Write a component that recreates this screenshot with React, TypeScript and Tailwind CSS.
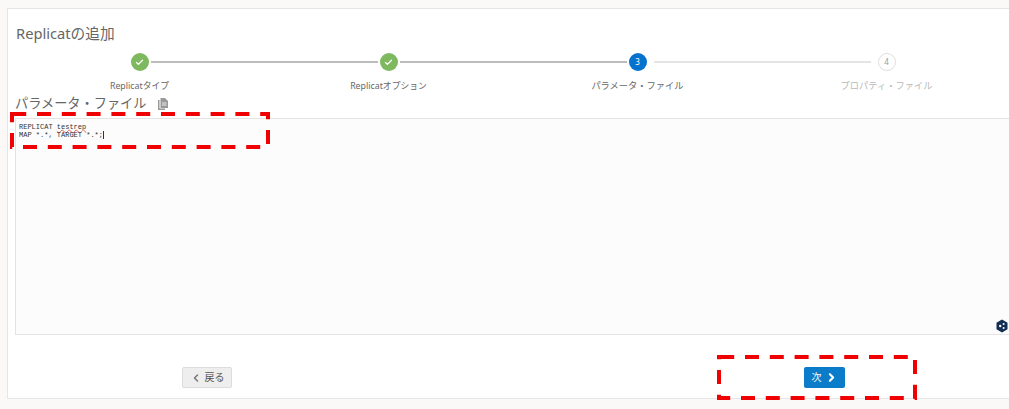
import { Check, ChevronLeft, ChevronRight } from 'lucide-react';

const steps = [
  { label: 'Replicatタイプ', state: 'done' },
  { label: 'Replicatオプション', state: 'done' },
  { label: 'パラメータ・ファイル', state: 'current' },
  { label: 'プロパティ・ファイル', state: 'todo' },
];

function StepCircle({ state, index }: { state: string; index: number }) {
  if (state === 'done') {
    return (
      <div className="flex h-[18px] w-[18px] shrink-0 items-center justify-center rounded-full bg-[#7fb95f]">
        <Check className="h-[9px] w-[9px] text-white" strokeWidth={3.5} />
      </div>
    );
  }
  if (state === 'current') {
    return (
      <div className="flex h-[18px] w-[18px] shrink-0 items-center justify-center rounded-full bg-[#0572ce] text-[8px] text-white">
        {index + 1}
      </div>
    );
  }
  return (
    <div className="flex h-[18px] w-[18px] shrink-0 items-center justify-center rounded-full border border-[#dfdfdf] bg-white text-[8px] text-[#999]">
      {index + 1}
    </div>
  );
}

function Stepper() {
  return (
    <div className="mt-[10px] grid w-[996px] grid-cols-4">
      {steps.map((step, i) => (
        <div key={step.label} className="flex flex-col items-center">
          <div className="flex w-full items-center">
            <div className="flex-1">
              {i > 0 && <div className={i < 3 ? 'mr-[2px] h-[1.5px] bg-[#bcbcbc]' : 'mr-[7px] h-[1.5px] bg-[#e4e4e4]'} />}
            </div>
            <StepCircle state={step.state} index={i} />
            <div className="flex-1">
              {i < 3 && <div className={i < 2 ? 'ml-[2px] h-[1.5px] bg-[#bcbcbc]' : 'ml-[7px] h-[1.5px] bg-[#e4e4e4]'} />}
            </div>
          </div>
          <div
            className={`mt-[8px] whitespace-nowrap leading-[14px] ${i < 2 ? 'text-[8.8px]' : 'text-[9.25px]'} ${
              step.state === 'todo' ? 'text-[#b8b8b8]' : 'text-[#666]'
            }`}
          >
            {step.label}
          </div>
        </div>
      ))}
    </div>
  );
}

// dashed annotation boxes drawn on top of the screenshot, one line per side
// offsets = [top, right, bottom, left]
function DashedBox({ className, w, h, offsets }: { className: string; w: number; h: number; offsets: number[] }) {
  const sides = [
    [0, 2, w, 2],
    [w - 2, 0, w - 2, h],
    [0, h - 2, w, h - 2],
    [2, 0, 2, h],
  ];
  return (
    <svg className={`pointer-events-none absolute ${className}`} width={w} height={h}>
      {sides.map(([x1, y1, x2, y2], i) => (
        <line
          key={i}
          x1={x1}
          y1={y1}
          x2={x2}
          y2={y2}
          stroke="#f00000"
          strokeWidth="4"
          strokeDasharray="14 10.8"
          strokeDashoffset={offsets[i]}
        />
      ))}
    </svg>
  );
}

export default function App() {
  return (
    <div
      className="relative h-[409px] w-[1009px] overflow-hidden bg-[#faf9f7] pl-[7px] pt-[8px]"
      style={{ fontFamily: '"Noto Sans", "Noto Sans CJK JP", sans-serif' }}
    >
      <div className="h-[391px] w-[1020px] border border-[#e6e6e6] bg-white pl-[7px]">
        <h1 className="mt-[14px] pl-[1px] text-[14.7px] font-normal leading-[20px] text-[#666]">Replicatの追加</h1>
        <Stepper />

        <div className="mt-[2px] flex h-[16px] items-center">
          <h2 className="whitespace-nowrap text-[13.2px] font-normal leading-[16px] text-[#666]">パラメータ・ファイル</h2>
          <svg className="ml-[12px] mt-[2px]" width="10" height="12" viewBox="0 0 10 12">
            <path d="M0 2h1.5v8.5H7V12H0z" fill="#999" />
            <path d="M2.5 0H7l3 3v7H2.5z" fill="#999" />
            <path d="M4 5h4.5M4 7h4.5" stroke="#fff" strokeWidth="0.8" />
          </svg>
        </div>

        <div className="relative mt-[7px] h-[217px] border border-[#e3e3e3] bg-[#fcfcfc] px-[3px] py-[4px]">
          <div className="text-[7px] leading-[8px] text-[#333]" style={{ fontFamily: '"Liberation Mono", monospace' }}>
            <div>
              REPLICAT <span className="underline decoration-[#e06060] decoration-wavy decoration-1 underline-offset-[0px]">testrep</span>
            </div>
            <div className="flex items-center">
              MAP *.*, TARGET *.*;<span className="h-[8px] w-px bg-[#333]" />
            </div>
          </div>
          <svg className="absolute left-[980px] top-[200px]" width="12" height="14" viewBox="0 0 12 13">
            <path d="M6 0l5.5 3.2v6.6L6 13 .5 9.8V3.2z" fill="#142f55" />
            <circle cx="4.2" cy="6.5" r="1.2" fill="#fff" />
            <circle cx="7.6" cy="4.4" r="1" fill="#fff" />
            <circle cx="7.6" cy="8.6" r="1" fill="#fff" />
          </svg>
        </div>

        <div className="relative h-[64px]">
          <button className="absolute left-[167px] top-[32px] flex h-[21px] w-[50px] items-center justify-center gap-[3px] rounded-[2px] border border-[#dcdcdc] bg-[#eeeeee] text-[10px] text-[#555]">
            <ChevronLeft className="h-[12px] w-[12px] text-[#777]" strokeWidth={3} />
            戻る
          </button>
          <button className="absolute left-[789px] top-[32px] flex h-[21px] w-[41px] items-center justify-center gap-[3px] rounded-[2px] bg-[#0a7cc9] text-[10px] text-white">
            次
            <ChevronRight className="h-[13px] w-[13px]" strokeWidth={4} />
          </button>
        </div>
      </div>

      <DashedBox className="left-[10px] top-[112px]" w={260} h={37} offsets={[22.6, 6.8, 11.8, 3.8]} />
      <DashedBox className="left-[717px] top-[355px]" w={200} h={45} offsets={[21.6, 19.8, 0.8, 9.8]} />
    </div>
  );
}
